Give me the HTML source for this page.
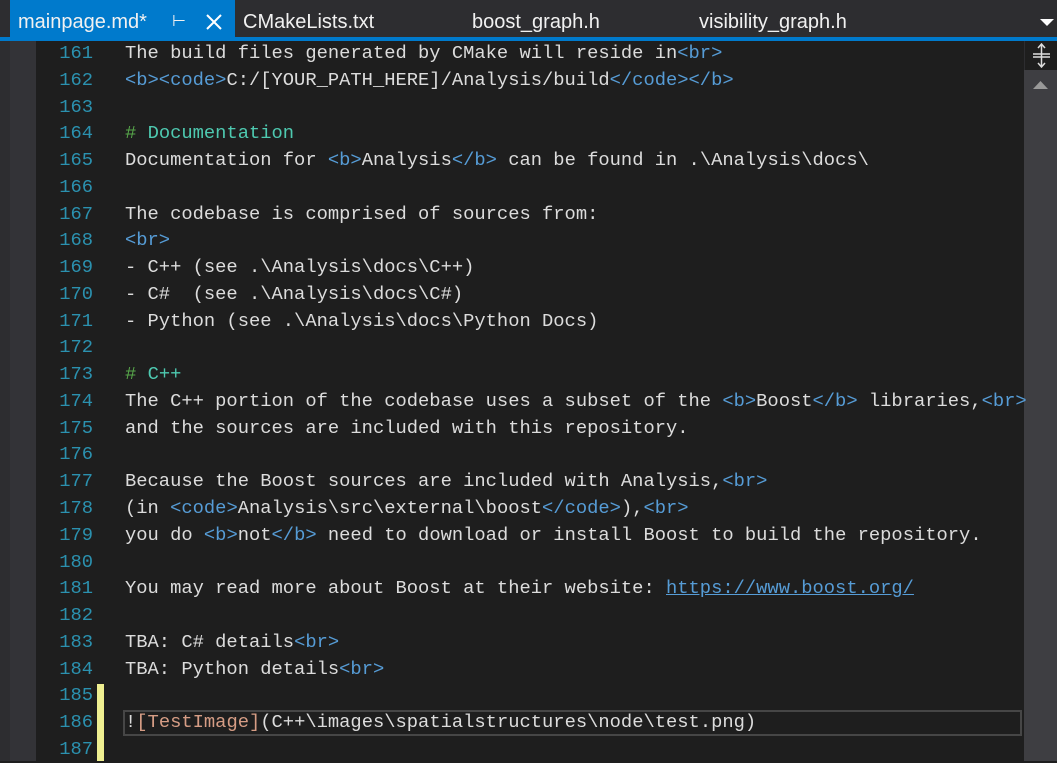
<!DOCTYPE html>
<html><head><meta charset="utf-8"><style>
*{margin:0;padding:0;box-sizing:border-box}
body{width:1057px;height:761px;background:#1e1e1e;overflow:hidden;position:relative;font-family:"Liberation Mono",monospace}
.tabbar{position:absolute;left:0;top:0;width:1057px;height:41px;background:#2d2d30}
.blue{position:absolute;left:0;top:37px;width:1057px;height:4px;background:#007acc}
.tab{position:absolute;top:0;height:41px;font-family:"Liberation Sans",sans-serif;font-size:20px;color:#f1f1f1;line-height:44px;white-space:nowrap}
.active{left:10px;width:225px;background:#007acc;padding-left:8px}
.gut1{position:absolute;left:0;top:41px;width:10px;height:720px;background:#2d2d30}
.gut2{position:absolute;left:10px;top:41px;width:26px;height:720px;background:#333337}
.code{position:absolute;left:0;top:40px;width:1024px;font-size:18.8px;line-height:26.77px;color:#dcdcdc}
.ln{position:absolute;left:0;top:0;width:93px;text-align:right;color:#2b91af}
.row{height:26.77px;position:relative}
.txt{position:absolute;left:125px;top:0;white-space:pre}
.t{color:#569cd6}.h{color:#57a64a}.hd{color:#4ec9b0}.u{color:#569cd6;text-decoration:underline}.o{color:#d69d85}
.yel{position:absolute;left:97px;top:684px;width:7px;height:77px;background:#efef91}
.cur{position:absolute;left:123px;top:710px;width:899px;height:26px;border:2px solid #464646}
.sb{position:absolute;left:1024px;top:41px;width:33px;height:720px;background:#3e3e42}
.split{position:absolute;left:1024px;top:41px;width:33px;height:29px;background:#1e1e1e;border-left:1px solid #2d2d30}
</style></head><body>
<div class="tabbar"></div>
<div class="tab active">mainpage.md*<span style="position:absolute;left:162px;font-size:16px">&#8866;</span><svg style="position:absolute;left:196px;top:14px" width="16" height="16" viewBox="0 0 16 16"><path d="M1 1L15 15M15 1L1 15" stroke="#fff" stroke-width="2"/></svg></div>
<div class="tab" style="left:243px">CMakeLists.txt</div>
<div class="tab" style="left:472px">boost_graph.h</div>
<div class="tab" style="left:699px">visibility_graph.h</div>
<svg style="position:absolute;left:1040px;top:19px" width="14" height="8"><path d="M0 0H14L7 7Z" fill="#fff"/></svg>
<div class="blue"></div>
<div class="gut1"></div><div class="gut2"></div>
<div class="sb"></div>
<div class="split"><svg width="33" height="29"><path d="M8 13H25M8 16H25M16.5 3V26M13 7L16.5 3L20 7M13 22L16.5 26L20 22" stroke="#ddd" stroke-width="1.5" fill="none"/></svg></div>
<svg style="position:absolute;left:1033px;top:80px" width="16" height="10"><path d="M0 9H15L7.5 1Z" fill="#999"/></svg>
<div class="yel"></div>
<div class="cur"></div>
<div class="code"><div class="row"><span class="ln">161</span><span class="txt">The build files generated by CMake will reside in<span class="t">&lt;br&gt;</span></span></div><div class="row"><span class="ln">162</span><span class="txt"><span class="t">&lt;b&gt;&lt;code&gt;</span>C:/[YOUR_PATH_HERE]/Analysis/build<span class="t">&lt;/code&gt;&lt;/b&gt;</span></span></div><div class="row"><span class="ln">163</span></div><div class="row"><span class="ln">164</span><span class="txt"><span class="h">#</span> <span class="hd">Documentation</span></span></div><div class="row"><span class="ln">165</span><span class="txt">Documentation for <span class="t">&lt;b&gt;</span>Analysis<span class="t">&lt;/b&gt;</span> can be found in .\Analysis\docs\</span></div><div class="row"><span class="ln">166</span></div><div class="row"><span class="ln">167</span><span class="txt">The codebase is comprised of sources from:</span></div><div class="row"><span class="ln">168</span><span class="txt"><span class="t">&lt;br&gt;</span></span></div><div class="row"><span class="ln">169</span><span class="txt">- C++ (see .\Analysis\docs\C++)</span></div><div class="row"><span class="ln">170</span><span class="txt">- C#  (see .\Analysis\docs\C#)</span></div><div class="row"><span class="ln">171</span><span class="txt">- Python (see .\Analysis\docs\Python Docs)</span></div><div class="row"><span class="ln">172</span></div><div class="row"><span class="ln">173</span><span class="txt"><span class="h">#</span> <span class="hd">C++</span></span></div><div class="row"><span class="ln">174</span><span class="txt">The C++ portion of the codebase uses a subset of the <span class="t">&lt;b&gt;</span>Boost<span class="t">&lt;/b&gt;</span> libraries,<span class="t">&lt;br&gt;</span></span></div><div class="row"><span class="ln">175</span><span class="txt">and the sources are included with this repository.</span></div><div class="row"><span class="ln">176</span></div><div class="row"><span class="ln">177</span><span class="txt">Because the Boost sources are included with Analysis,<span class="t">&lt;br&gt;</span></span></div><div class="row"><span class="ln">178</span><span class="txt">(in <span class="t">&lt;code&gt;</span>Analysis\src\external\boost<span class="t">&lt;/code&gt;</span>),<span class="t">&lt;br&gt;</span></span></div><div class="row"><span class="ln">179</span><span class="txt">you do <span class="t">&lt;b&gt;</span>not<span class="t">&lt;/b&gt;</span> need to download or install Boost to build the repository.</span></div><div class="row"><span class="ln">180</span></div><div class="row"><span class="ln">181</span><span class="txt">You may read more about Boost at their website: <span class="u">https://www.boost.org/</span></span></div><div class="row"><span class="ln">182</span></div><div class="row"><span class="ln">183</span><span class="txt">TBA: C# details<span class="t">&lt;br&gt;</span></span></div><div class="row"><span class="ln">184</span><span class="txt">TBA: Python details<span class="t">&lt;br&gt;</span></span></div><div class="row"><span class="ln">185</span></div><div class="row"><span class="ln">186</span><span class="txt">!<span class="o">[TestImage]</span>(C++\images\spatialstructures\node\test.png)</span></div><div class="row"><span class="ln">187</span></div></div>
</body></html>
